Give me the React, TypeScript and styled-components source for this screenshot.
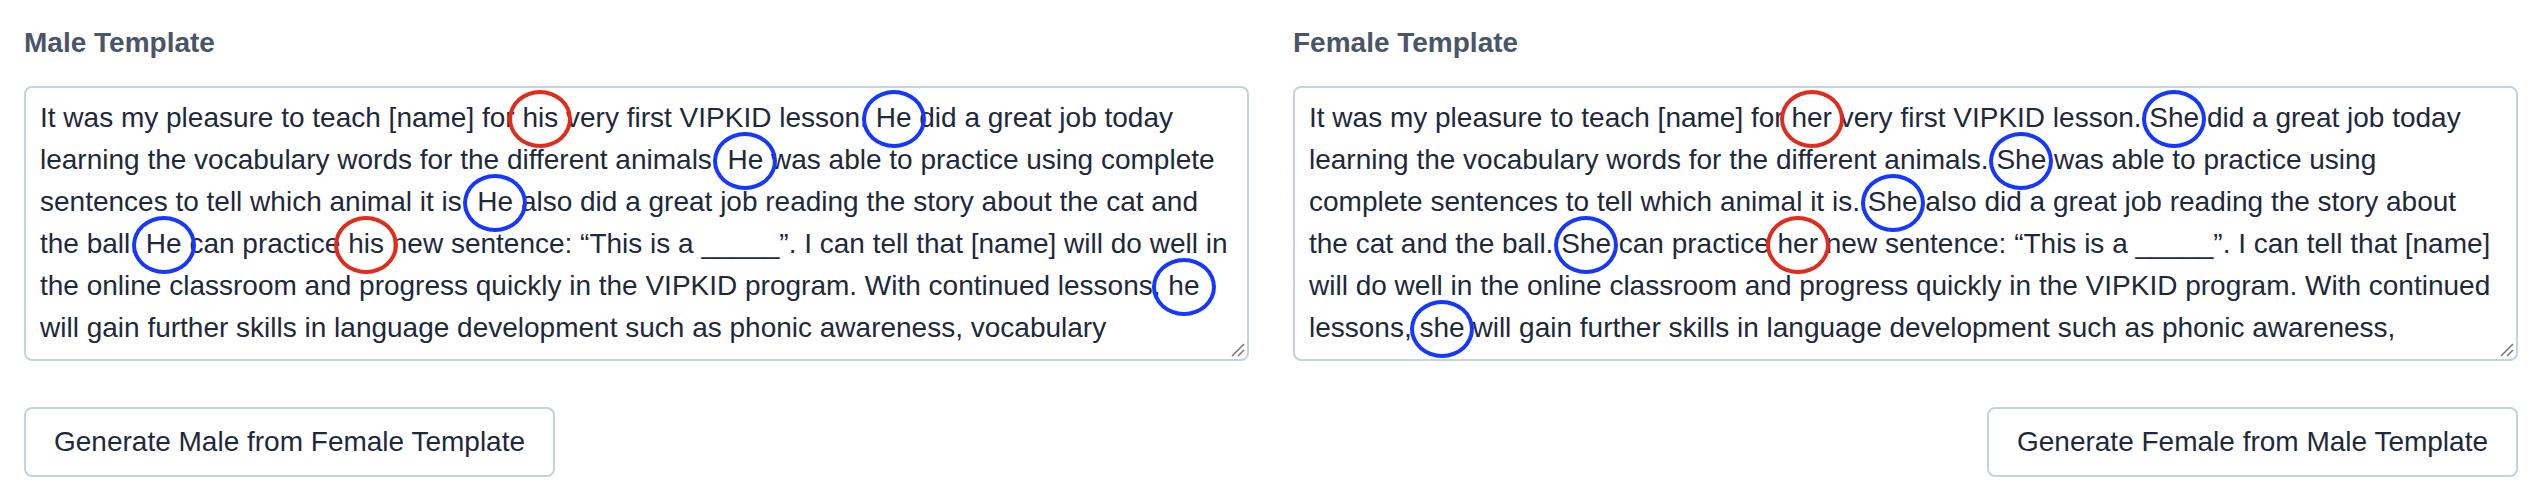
import React from "react";
import styled, { createGlobalStyle } from "styled-components";

type Tone = "red" | "blue";
type Segment = string | { tone: Tone; word: string };

const r = (word: string): Segment => ({ tone: "red", word });
const b = (word: string): Segment => ({ tone: "blue", word });

const maleLines: Segment[][] = [
  ["It was my pleasure to teach [name] for ", r("his"), " very first VIPKID lesson. ", b("He"), " did a great job today"],
  ["learning the vocabulary words for the different animals. ", b("He"), " was able to practice using complete"],
  ["sentences to tell which animal it is. ", b("He"), " also did a great job reading the story about the cat and"],
  ["the ball. ", b("He"), " can practice ", r("his"), " new sentence: \u201cThis is a _____\u201d. I can tell that [name] will do well in"],
  ["the online classroom and progress quickly in the VIPKID program. With continued lessons, ", b("he")],
  ["will gain further skills in language development such as phonic awareness, vocabulary"],
  ["knowledge, and reading comprehension. I look forward to seeing [name] in class again!"],
];

const femaleLines: Segment[][] = [
  ["It was my pleasure to teach [name] for ", r("her"), " very first VIPKID lesson. ", b("She"), " did a great job today"],
  ["learning the vocabulary words for the different animals. ", b("She"), " was able to practice using"],
  ["complete sentences to tell which animal it is. ", b("She"), " also did a great job reading the story about"],
  ["the cat and the ball. ", b("She"), " can practice ", r("her"), " new sentence: \u201cThis is a _____\u201d. I can tell that [name]"],
  ["will do well in the online classroom and progress quickly in the VIPKID program. With continued"],
  ["lessons, ", b("she"), " will gain further skills in language development such as phonic awareness,"],
  ["vocabulary knowledge, and reading comprehension. I look forward to seeing [name] in class again!"],
];

const GlobalStyle = createGlobalStyle`
  html, body {
    margin: 0;
    padding: 0;
    background: #ffffff;
  }
  body {
    font-family: "Liberation Sans", Arial, Helvetica, sans-serif;
    -webkit-font-smoothing: antialiased;
  }
`;

const Page = styled.div`
  display: grid;
  grid-template-columns: 1fr 1fr;
  column-gap: 44px;
  padding: 22px 24px;
`;

const Column = styled.section`
  display: flex;
  flex-direction: column;
  min-width: 0;
`;

const Heading = styled.h2`
  margin: 0 0 22px;
  font-size: 28px;
  line-height: 42px;
  font-weight: 700;
  color: #4a5568;
`;

const TemplateBox = styled.div`
  position: relative;
  box-sizing: border-box;
  height: 275px;
  padding: 9px 14px;
  border: 2px solid #c7d2df;
  border-radius: 8px;
  overflow: hidden;
  font-size: 28px;
  line-height: 42px;
  color: #1e293b;
  background: #ffffff;
`;

const Line = styled.div`
  white-space: nowrap;
`;

const Mark = styled.span<{ $tone: Tone }>`
  position: relative;

  &::after {
    content: "";
    position: absolute;
    left: 50%;
    top: 50%;
    width: 64px;
    height: 58px;
    box-sizing: border-box;
    transform: translate(-50%, calc(-50% + 1px));
    border: 4px solid ${(p) => (p.$tone === "red" ? "#e02b1d" : "#1637ff")};
    border-radius: 50%;
    pointer-events: none;
  }
`;

const Grip = styled.svg`
  position: absolute;
  right: 2px;
  bottom: 2px;
  width: 14px;
  height: 14px;
`;

const Button = styled.button<{ $align: "start" | "end" }>`
  align-self: ${(p) => (p.$align === "start" ? "flex-start" : "flex-end")};
  margin-top: 46px;
  box-sizing: border-box;
  height: 70px;
  padding: 0 28px;
  border: 2px solid #c7d2df;
  border-radius: 8px;
  background: #ffffff;
  font-family: inherit;
  font-size: 28px;
  color: #1e293b;
  cursor: pointer;
`;

function TemplateText({ lines }: { lines: Segment[][] }) {
  return (
    <TemplateBox>
      {lines.map((line, i) => (
        <Line key={i}>
          {line.map((seg, j) =>
            typeof seg === "string" ? (
              <React.Fragment key={j}>{seg}</React.Fragment>
            ) : (
              <Mark key={j} $tone={seg.tone}>
                {seg.word}
              </Mark>
            )
          )}
        </Line>
      ))}
      <Grip viewBox="0 0 14 14">
        <line x1="1" y1="13" x2="13" y2="1" stroke="#7a7a7a" strokeWidth="1.6" />
        <line x1="7" y1="13" x2="13" y2="7" stroke="#7a7a7a" strokeWidth="1.6" />
      </Grip>
    </TemplateBox>
  );
}

export default function App() {
  return (
    <>
      <GlobalStyle />
      <Page>
        <Column>
          <Heading>Male Template</Heading>
          <TemplateText lines={maleLines} />
          <Button $align="start">Generate Male from Female Template</Button>
        </Column>
        <Column>
          <Heading>Female Template</Heading>
          <TemplateText lines={femaleLines} />
          <Button $align="end">Generate Female from Male Template</Button>
        </Column>
      </Page>
    </>
  );
}
